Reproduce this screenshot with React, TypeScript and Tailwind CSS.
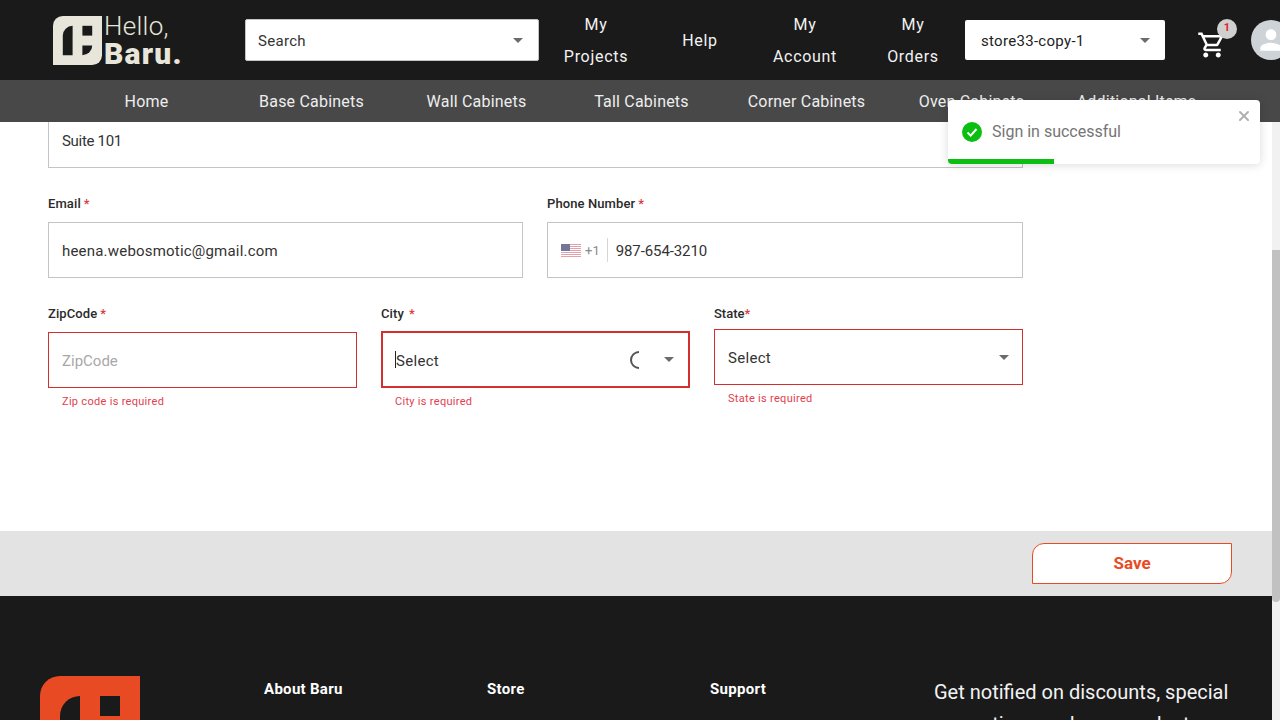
import { X } from 'lucide-react';

const font = "font-['Roboto',sans-serif]";

function LogoMark({ className, fill, hole }: { className: string; fill: string; hole: string }) {
  return (
    <svg viewBox="0 0 100 100" className={className}>
      <path d="M20 0H100V80A20 20 0 0 1 80 100H0V20A20 20 0 0 1 20 0Z" fill={fill} />
      <path d="M40 20V80H20V40A20 20 0 0 1 40 20Z" fill={hole} />
      <rect x="60" y="20" width="20" height="20" fill={hole} />
      <path d="M60 60H80A20 20 0 0 1 60 80Z" fill={hole} />
    </svg>
  );
}

function Caret() {
  return <span className="w-0 h-0 border-x-[5px] border-x-transparent border-t-[5px] border-t-[#6b6b6b]" />;
}

function Label({ text, gap = false }: { text: string; gap?: boolean }) {
  return (
    <div className="h-[20px] text-[13px] leading-[22px] font-medium text-[#2a2a2a] tracking-[0.1px]">
      {text}
      <span className={`text-[#d93a3a] ${gap ? 'ml-[5px]' : 'ml-[3px]'}`}>*</span>
    </div>
  );
}

function NavLink({ top, bottom }: { top: string; bottom: string }) {
  return (
    <div className="flex flex-col items-center pt-[2px] text-[16px] leading-[32px] text-[#f2f2f2] tracking-[0.7px]">
      <span>{top}</span>
      <span>{bottom}</span>
    </div>
  );
}

function App() {
  const menu = ['Home', 'Base Cabinets', 'Wall Cabinets', 'Tall Cabinets', 'Corner Cabinets', 'Oven Cabinets', 'Additional Items'];

  return (
    <div className={`relative h-[720px] w-[1280px] overflow-hidden flex flex-col bg-white ${font}`}>
      {/* Header */}
      <header className="h-[80px] shrink-0 bg-[#1a1a1a] flex items-center relative z-10">
        <div className="ml-[53px] w-[192px] shrink-0 flex items-center">
          <LogoMark className="w-[49px] h-[49px]" fill="#e8e6da" hole="#1a1a1a" />
          <div className="ml-[2px] pt-[2px] flex flex-col text-[#e8e6da]">
            <span className="text-[26px] leading-[26px] font-light tracking-[0.3px]">Hello,</span>
            <span className="text-[30px] leading-[30px] font-black tracking-[1.2px]">Baru.</span>
          </div>
        </div>
        <div className="w-[294px] h-[42px] shrink-0 bg-white border border-[#c4c4c4] rounded-[2px] flex items-center justify-between pl-[12px] pr-[15px] text-[15px] text-[#333]">
          <span className="pt-[3px] tracking-[0.3px]">Search</span>
          <Caret />
        </div>
        <div className="ml-[24px] w-[66px] shrink-0 flex justify-center">
          <NavLink top="My" bottom="Projects" />
        </div>
        <div className="ml-[36px] w-[70px] shrink-0 pt-[2px] text-center text-[16px] text-[#f2f2f2] tracking-[0.7px]">Help</div>
        <div className="ml-[35px] w-[70px] shrink-0 flex justify-center">
          <NavLink top="My" bottom="Account" />
        </div>
        <div className="ml-[46px] w-[54px] shrink-0 flex justify-center">
          <NavLink top="My" bottom="Orders" />
        </div>
        <div className="ml-[25px] w-[200px] h-[40px] shrink-0 bg-white rounded-[2px] flex items-center justify-between pl-[16px] pr-[15px] text-[15px] text-[#222]">
          <span className="pt-[2px] tracking-[0.3px]">store33-copy-1</span>
          <Caret />
        </div>
        <div className="relative ml-[32px] w-[30px] h-[30px] shrink-0 mt-[9px]">
          <svg viewBox="0 0 24 24" className="w-[30px] h-[30px] fill-white">
            <path d="M15.55 13c.75 0 1.41-.41 1.75-1.03l3.58-6.49c.37-.66-.11-1.48-.87-1.48H5.21l-.94-2H1v2h2l3.6 7.59-1.35 2.44C4.52 15.37 5.48 17 7 17h12v-2H7l1.1-2h7.45zM6.16 6h12.15l-2.76 5H8.53L6.16 6zM7 18c-1.1 0-1.99.9-1.99 2S5.9 22 7 22s2-.9 2-2-.9-2-2-2zm10 0c-1.1 0-1.99.9-1.99 2s.89 2 1.99 2 2-.9 2-2-.9-2-2-2z" />
          </svg>
          <span className="absolute left-[20px] top-[-11px] w-[20px] h-[20px] rounded-full bg-[#cfcfcf] text-[#e8222a] text-[11px] font-bold flex items-center justify-center">1</span>
        </div>
        <div className="ml-[24px] w-[40px] h-[40px] shrink-0 rounded-full bg-[#ced3d8] flex items-center justify-center">
          <svg viewBox="0 0 24 24" className="w-[32px] h-[32px] fill-white">
            <path d="M12 12c2.21 0 4-1.79 4-4s-1.79-4-4-4-4 1.79-4 4 1.79 4 4 4zm0 2c-2.67 0-8 1.34-8 4v2h16v-2c0-2.66-5.33-4-8-4z" />
          </svg>
        </div>
      </header>

      {/* Menu */}
      <nav className="h-[42px] shrink-0 bg-[#484848] relative z-10">
        <div className="ml-[64px] w-[1155px] h-full pt-[2px] grid grid-cols-7 items-center text-center text-[16px] text-[#eeeeee] tracking-[0.2px]">
          {menu.map((item) => (
            <span key={item}>{item}</span>
          ))}
        </div>
      </nav>

      <div className="flex-1 min-h-0 flex">
        <div className="flex-1 min-w-0 flex flex-col">
          {/* Form */}
          <main className="h-[409px] shrink-0 pl-[48px] overflow-hidden">
            <div className="w-[975px] -mt-[10px]">
              <div className="h-[56px] border border-[#c4c4c4] flex items-center pt-[2px] px-[13px] text-[15px] text-[#333] tracking-[-0.3px]">Suite 101</div>

              <div className="mt-[25px] grid grid-cols-[475px_476px] gap-x-[24px]">
                <div>
                  <Label text="Email" />
                  <div className="mt-[9px] h-[56px] border border-[#c4c4c4] flex items-center pt-[2px] px-[13px] text-[15px] text-[#333] tracking-[0.2px]">heena.webosmotic@gmail.com</div>
                </div>
                <div>
                  <Label text="Phone Number" />
                  <div className="mt-[9px] h-[56px] border border-[#c4c4c4] flex items-center pl-[13px] text-[15px] text-[#333]">
                    <svg viewBox="0 0 20 13" className="w-[20px] h-[13px] opacity-70">
                      <rect width="20" height="13" fill="#fff" />
                      <path d="M0 0.5H20M0 2.5H20M0 4.5H20M0 6.5H20M0 8.5H20M0 10.5H20M0 12.5H20" stroke="#d97a85" strokeWidth="1" />
                      <rect width="9" height="7" fill="#3c3b6e" />
                    </svg>
                    <span className="ml-[4px] pt-[2px] text-[#8a8a8a] text-[13px]">+1</span>
                    <span className="ml-[7px] h-[24px] w-px bg-[#d6d6d6]" />
                    <span className="ml-[8px] pt-[2px] tracking-[-0.1px]">987-654-3210</span>
                  </div>
                </div>
              </div>

              <div className="mt-[25px] grid grid-cols-[309px_309px_309px] gap-x-[24px]">
                <div>
                  <Label text="ZipCode" />
                  <div className="mt-[9px] h-[56px] border border-[#d32f2f] flex items-center pt-[2px] px-[13px] text-[15px] text-[#a8a8a8]">ZipCode</div>
                  <div className="mt-[6px] ml-[14px] text-[11px] leading-[16px] text-[#e2404f] tracking-[0.3px]">Zip code is required</div>
                </div>
                <div>
                  <Label text="City" gap />
                  <div className="mt-[8px] h-[57px] border-2 border-[#d32f2f] flex items-center pl-[12px] pr-[14px] text-[15px] text-[#333]">
                    <span className="w-px h-[17px] bg-[#222]" />
                    <span className="flex-1 pt-[3px] tracking-[0.3px]">Select</span>
                    <svg viewBox="0 0 20 20" className="w-[20px] h-[20px] mr-[16px]">
                      <path d="M11 2A8 8 0 0 0 11 18" fill="none" stroke="#555" strokeWidth="2" />
                    </svg>
                    <Caret />
                  </div>
                  <div className="mt-[6px] ml-[14px] text-[11px] leading-[16px] text-[#e2404f] tracking-[0.3px]">City is required</div>
                </div>
                <div>
                  <div className="h-[20px] text-[13px] leading-[22px] font-medium text-[#2a2a2a]">
                    State<span className="text-[#d93a3a]">*</span>
                  </div>
                  <div className="mt-[6px] h-[56px] border border-[#d32f2f] flex items-center justify-between pl-[13px] pr-[13px] text-[15px] text-[#333]">
                    <span className="pt-[2px] tracking-[0.3px]">Select</span>
                    <Caret />
                  </div>
                  <div className="mt-[6px] ml-[14px] text-[11px] leading-[16px] text-[#e2404f] tracking-[0.3px]">State is required</div>
                </div>
              </div>
            </div>
          </main>

          {/* Save bar */}
          <div className="h-[65px] shrink-0 bg-[#e3e3e3] flex items-center justify-end pr-[40px]">
            <button className="w-[200px] h-[41px] bg-white border border-[#e84b24] rounded-tl-[12px] rounded-br-[12px] text-[#e84b24] text-[17px] font-bold">Save</button>
          </div>

          {/* Footer */}
          <footer className="flex-1 min-h-0 bg-[#1a1a1a] overflow-hidden flex pt-[80px] pl-[40px] text-white">
            <LogoMark className="w-[100px] h-[100px] shrink-0" fill="#e84b24" hole="#1a1a1a" />
            <div className="ml-[124px] w-[223px] pt-[1px] text-[15px] font-bold leading-[24px] tracking-[0.3px]">About Baru</div>
            <div className="w-[223px] pt-[1px] text-[15px] font-bold leading-[24px] tracking-[0.3px]">Store</div>
            <div className="w-[224px] pt-[1px] text-[15px] font-bold leading-[24px] tracking-[0.3px]">Support</div>
            <div className="w-[310px] text-[20px] leading-[32px] text-[#f2f2f2]">Get notified on discounts, special promotions and new products</div>
          </footer>
        </div>

        {/* Scrollbar */}
        <div className="w-[8px] shrink-0 bg-[#f1f1f1] pt-[128px]">
          <div className="h-[352px] bg-[#c1c1c1] rounded-b-[4px]" />
        </div>
      </div>

      {/* Toast */}
      <div className="absolute left-[948px] top-[100px] z-20 w-[312px] h-[64px] bg-white rounded-[4px] shadow-[0_1px_10px_rgba(0,0,0,0.15)] overflow-hidden">
        <div className="flex items-center h-[64px] pb-[1px] pl-[14px]">
          <svg viewBox="0 0 20 20" className="w-[20px] h-[20px]">
            <circle cx="10" cy="10" r="10" fill="#0abf12" />
            <path d="M5.5 10.5L8.7 13.6L14.5 7" fill="none" stroke="#fff" strokeWidth="2" />
          </svg>
          <span className="ml-[10px] text-[16px] text-[#757575]">Sign in successful</span>
        </div>
        <X className="absolute right-[8px] top-[8px] w-[16px] h-[16px] text-[#b0b0b0]" strokeWidth={3} />
        <div className="absolute left-0 bottom-0 h-[5px] w-[106px] bg-[#0abf12]" />
      </div>
    </div>
  );
}

export default App;
